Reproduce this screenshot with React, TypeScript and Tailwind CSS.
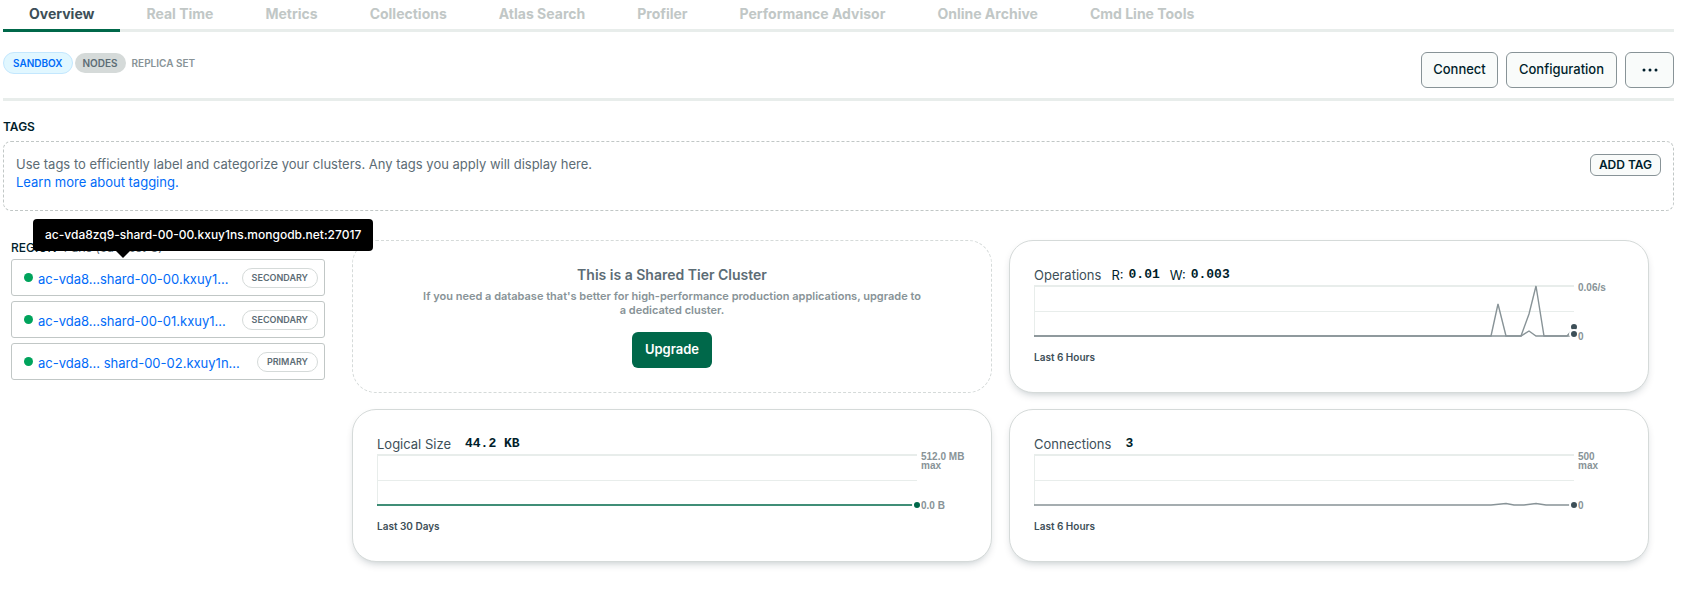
import React from "react";

type Tab = { label: string; active?: boolean };

const tabs: Tab[] = [
  { label: "Overview", active: true },
  { label: "Real Time" },
  { label: "Metrics" },
  { label: "Collections" },
  { label: "Atlas Search" },
  { label: "Profiler" },
  { label: "Performance Advisor" },
  { label: "Online Archive" },
  { label: "Cmd Line Tools" },
];

const nodes = [
  { name: "ac-vda8...shard-00-00.kxuy1...", role: "SECONDARY" },
  { name: "ac-vda8...shard-00-01.kxuy1...", role: "SECONDARY" },
  { name: "ac-vda8... shard-00-02.kxuy1n...", role: "PRIMARY" },
];

function OutlineButton({ children, className, label }: { children: React.ReactNode; className: string; label?: string }) {
  return (
    <button
      type="button"
      aria-label={label}
      className={`rounded-md border border-[#889397] bg-[#f9fbfa] text-[#001e2b] ${className}`}
    >
      {children}
    </button>
  );
}

type ChartProps = {
  color: string;
  dotColor: string;
  series: string[];
  dots: number[];
  top: string;
  topNote?: string;
  bottom: string;
};

function Chart({ color, dotColor, series, dots, top, topNote, bottom }: ChartProps) {
  return (
    <div className="flex items-end">
      <svg className="block h-[56px] min-w-0 flex-1 overflow-visible" aria-hidden="true">
        <svg viewBox="0 0 540 54" preserveAspectRatio="none" width="100%" height="54" overflow="visible">
          <path d="M0 1H540" stroke="#e8edeb" strokeWidth="2" />
          <path d="M0 26.5H540M0.5 0V52" stroke="#e8edeb" strokeWidth="1" fill="none" />
          {series.map((d) => (
            <path key={d} d={d} fill="none" stroke={color} strokeWidth="1.4" vectorEffect="non-scaling-stroke" />
          ))}
        </svg>
        {dots.map((y) => (
          <circle key={y} cx="100%" cy={y} r="4" fill={dotColor} stroke="#fff" strokeWidth="2" />
        ))}
      </svg>
      <div className="-mt-[2px] flex h-[58px] w-[50px] flex-col justify-between pl-1 font-['Liberation_Sans',sans-serif] text-[10px] leading-[9px] font-bold text-[#889397]">
        <span>
          {top}
          {topNote && <span className="block">{topNote}</span>}
        </span>
        <span>{bottom}</span>
      </div>
    </div>
  );
}

function Card({ children, period, chart }: { children: React.ReactNode; period: string; chart: ChartProps }) {
  return (
    <section className="h-[153px] rounded-3xl border border-[#d5dad9] bg-white px-6 pt-6 shadow-[0_4px_10px_-4px_rgba(0,30,43,0.3)]">
      <div className="flex h-5 items-center text-[13px] leading-5 text-[#001e2b]">{children}</div>
      <Chart {...chart} />
      <p className="mt-2 text-[10px] leading-4 font-semibold text-[#3d4f58]">{period}</p>
    </section>
  );
}

const mono = "font-['Liberation_Mono',monospace] font-bold";

export default function App() {
  return (
    <main className="min-h-screen bg-white pr-3 pl-[3px] font-['Inter',sans-serif] text-[13px] text-[#001e2b]">
      <nav className="flex h-8 border-b-[3px] border-[#e8edeb] text-sm font-bold">
        {tabs.map((t) => (
          <a
            key={t.label}
            href="#"
            className={
              t.active
                ? "h-8 border-b-[3px] border-[#00684a] px-[26px] leading-7 text-[#3d4f58]"
                : "h-8 px-[26px] leading-7 text-[#c1c7c6]"
            }
          >
            {t.label}
          </a>
        ))}
      </nav>

      <header className="flex h-[69px] items-start justify-between border-b-[3px] border-[#e8edeb] pt-5">
        <div className="flex h-[22px] items-center gap-[2px] text-[10px] font-semibold">
          <span className="rounded-full border border-[#c3e7fe] bg-[#e1f7ff] px-[9px] leading-5 text-[#016bf8]">SANDBOX</span>
          <span className="rounded-full bg-[#d5dad9] px-2 leading-5 text-[#5c6c75]">NODES</span>
          <span className="ml-1 text-[#889397]">REPLICA SET</span>
        </div>
        <div className="flex gap-2 text-[13px] font-medium">
          <OutlineButton className="h-9 w-[77px]">Connect</OutlineButton>
          <OutlineButton className="h-9 w-[111px]">Configuration</OutlineButton>
          <OutlineButton className="flex h-9 w-[49px] items-center justify-center" label="More actions">
            <svg width="16" height="4" viewBox="0 0 16 4" fill="currentColor" aria-hidden="true">
              <circle cx="2" cy="2" r="1.5" />
              <circle cx="8" cy="2" r="1.5" />
              <circle cx="14" cy="2" r="1.5" />
            </svg>
          </OutlineButton>
        </div>
      </header>

      <section>
        <h2 className="pt-[14px] pb-[2px] text-xs leading-6 font-semibold">TAGS</h2>
        <div className="flex h-[70px] items-start justify-between rounded-lg border border-dashed border-[#c1c7c6] p-3">
          <p className="pt-[1px] leading-[18px] text-[#5c6c75]">
            Use tags to efficiently label and categorize your clusters. Any tags you apply will display here.
            <br />
            <a href="#" className="text-[#016bf8]">Learn more about tagging.</a>
          </p>
          <OutlineButton className="h-[22px] w-[71px] text-xs leading-5 font-semibold">ADD TAG</OutlineButton>
        </div>
      </section>

      <div className="flex pt-[29px]">
        <aside className="mr-[27px] ml-2 w-[314px] shrink-0">
          <div className="relative">
            <h2 className="h-[19px] text-[12px] leading-[15px] font-medium whitespace-nowrap">
              REGION <span className="ml-1 font-normal text-[#5c6c75]">Paris (eu-west-3)</span>
            </h2>
            <div
              role="tooltip"
              className="absolute -top-[21px] left-[22px] z-10 rounded-[4px] bg-black px-3 text-[12px] leading-8 font-medium whitespace-nowrap text-white"
            >
              ac-vda8zq9-shard-00-00.kxuy1ns.mongodb.net:27017
              <svg className="absolute top-full left-[83px]" width="14" height="7" viewBox="0 0 14 7" aria-hidden="true">
                <path d="M0 0H14L7 7Z" fill="#000" />
              </svg>
            </div>
          </div>
          <ul className="flex flex-col gap-[5px]">
            {nodes.map((n) => (
              <li key={n.name} className="flex h-[37px] items-center rounded-[3px] border border-[#c1c7c6] pr-[6px] pl-3">
                <span className="size-[9px] shrink-0 rounded-full bg-[#00a35c]" />
                <a href="#" className="ml-[5px] flex-1 pt-1 whitespace-nowrap text-[#016bf8]">{n.name}</a>
                <span className="rounded-full border border-[#d5dad9] px-[9px] text-[9px] leading-[18px] font-semibold text-[#5c6c75]">
                  {n.role}
                </span>
              </li>
            ))}
          </ul>
        </aside>

        <div className="mr-[25px] grid min-w-0 flex-1 grid-cols-2 gap-x-[17px] gap-y-4">
          <section className="flex h-[153px] flex-col items-center rounded-3xl border border-dashed border-[#d5dad9] pt-6 text-center">
            <h3 className="text-[14px] leading-5 font-semibold text-[#5c6c75]">This is a Shared Tier Cluster</h3>
            <p className="mt-1 max-w-[500px] text-[11px] leading-[14px] font-semibold text-[#889397]">
              If you need a database that's better for high-performance production applications, upgrade to a dedicated cluster.
            </p>
            <button type="button" className="mt-[15px] h-9 w-20 rounded-md bg-[#00684a] text-[13px] font-semibold text-white">
              Upgrade
            </button>
          </section>

          <Card
            period="Last 6 Hours"
            chart={{
              color: "#889397",
              dotColor: "#3d4f58",
              series: [
                "M0 51H457L464 19L472 51H487L495 29L502 1L510 51H533L540 43",
                "M0 51H487L495 46L502 51H540",
              ],
              dots: [42, 49],
              top: "0.06/s",
              bottom: "0",
            }}
          >
            <span className="text-[#3d4f58]">Operations</span>
            <span className="ml-[10px]">R:</span>
            <span className={`ml-[5px] ${mono}`}>0.01</span>
            <span className="ml-[10px]">W:</span>
            <span className={`ml-[5px] ${mono}`}>0.003</span>
          </Card>

          <Card
            period="Last 30 Days"
            chart={{
              color: "#00684a",
              dotColor: "#00684a",
              series: ["M0 51H540"],
              dots: [51],
              top: "512.0 MB",
              topNote: "max",
              bottom: "0.0 B",
            }}
          >
            <span className="text-[#3d4f58]">Logical Size</span>
            <span className={`ml-[14px] ${mono}`}>44.2 KB</span>
          </Card>

          <Card
            period="Last 6 Hours"
            chart={{
              color: "#889397",
              dotColor: "#3d4f58",
              series: ["M0 51H457L472 49.5L480 51H490L502 49.5L512 51H540"],
              dots: [51],
              top: "500",
              topNote: "max",
              bottom: "0",
            }}
          >
            <span className="text-[#3d4f58]">Connections</span>
            <span className={`ml-[14px] ${mono}`}>3</span>
          </Card>
        </div>
      </div>
    </main>
  );
}
